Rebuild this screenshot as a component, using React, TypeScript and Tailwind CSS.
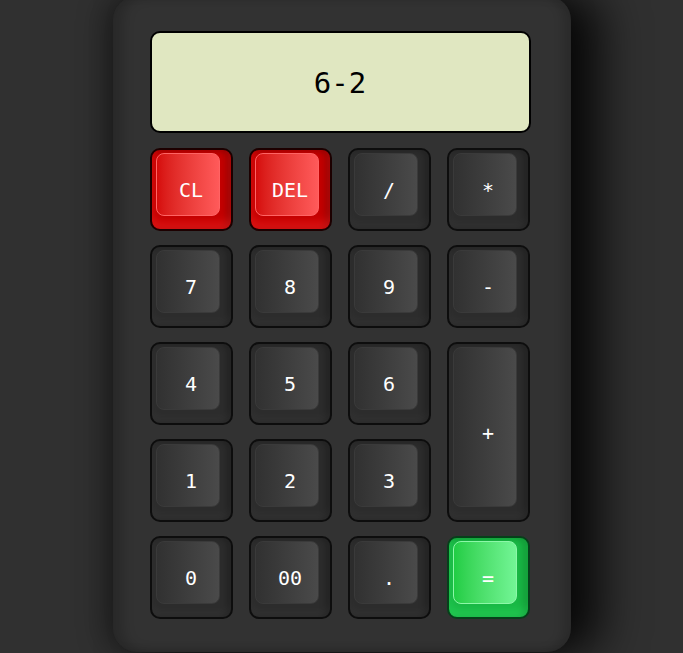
import React from "react";

type Key = {
	label: string;
	kind?: "dark" | "red" | "green";
	tall?: boolean;
};

const keys: Key[] = [
	{ label: "CL", kind: "red" },
	{ label: "DEL", kind: "red" },
	{ label: "/" },
	{ label: "*" },
	{ label: "7" },
	{ label: "8" },
	{ label: "9" },
	{ label: "-" },
	{ label: "4" },
	{ label: "5" },
	{ label: "6" },
	{ label: "+", tall: true },
	{ label: "1" },
	{ label: "2" },
	{ label: "3" },
	{ label: "0" },
	{ label: "00" },
	{ label: "." },
	{ label: "=", kind: "green" },
];

const outerStyles = {
	dark: "bg-[#2c2c2c] border-[#0d0d0d] shadow-[inset_0_-6px_8px_rgba(255,255,255,0.03),inset_-4px_0_6px_rgba(0,0,0,0.25)]",
	red: "bg-[#c40000] border-[#1c0000] shadow-[inset_0_-7px_8px_rgba(255,40,40,0.45),inset_-4px_0_6px_rgba(80,0,0,0.5)]",
	green: "bg-[#19b845] border-[#06401a] shadow-[inset_0_-6px_8px_rgba(60,255,120,0.3),inset_-4px_0_6px_rgba(0,80,20,0.4)]",
};

const capStyles = {
	dark: "bg-linear-to-r from-[#313131] to-[#4a4a4a] border-[#3a3a3a]",
	red: "bg-linear-to-r from-[#d60a0a] to-[#ff5a5a] border-[#ff6464]",
	green: "bg-linear-to-r from-[#1fcd44] to-[#72f595] border-[#8cf7a8]",
};

const CalcKey = ({ label, kind = "dark", tall }: Key) => (
	<button
		className={`relative flex items-center justify-center rounded-[10px] border-2 border-solid ${outerStyles[kind]} ${
			tall ? "row-span-2" : ""
		}`}
	>
		<span
			className={`absolute left-[4px] top-[3px] right-[11px] bottom-[13px] rounded-[8px] border ${capStyles[kind]}`}
		></span>
		<span className="relative pt-[1px] text-white text-[20px] font-medium leading-none font-['DejaVu_Sans_Mono',monospace]">
			{label}
		</span>
	</button>
);

export default function App() {
	return (
		<div className="h-[653px] w-full overflow-hidden bg-[#303030] flex justify-center">
			<div className="mt-[-4px] h-[656px] w-[458px] shrink-0 rounded-[24px] bg-[#323232] pl-[37px] pt-[35px] shadow-[inset_10px_0_12px_rgba(0,0,0,0.18),inset_-8px_0_10px_rgba(0,0,0,0.15),30px_0_45px_rgba(0,0,0,0.8),-6px_0_30px_rgba(0,0,0,0.45)]">
				<div className="flex h-[102px] w-[381px] items-center justify-center rounded-[10px] border-2 border-black bg-[#e0e7c1]">
					<span className="text-[29px] text-black font-['DejaVu_Sans_Mono',monospace] pt-[3px]">
						6-2
					</span>
				</div>
				<div className="mt-[15px] grid grid-cols-[83px_83px_83px_83px] auto-rows-[83px] gap-x-[16px] gap-y-[14px]">
					{keys.map((k) => (
						<CalcKey key={k.label} {...k} />
					))}
				</div>
			</div>
		</div>
	);
}
